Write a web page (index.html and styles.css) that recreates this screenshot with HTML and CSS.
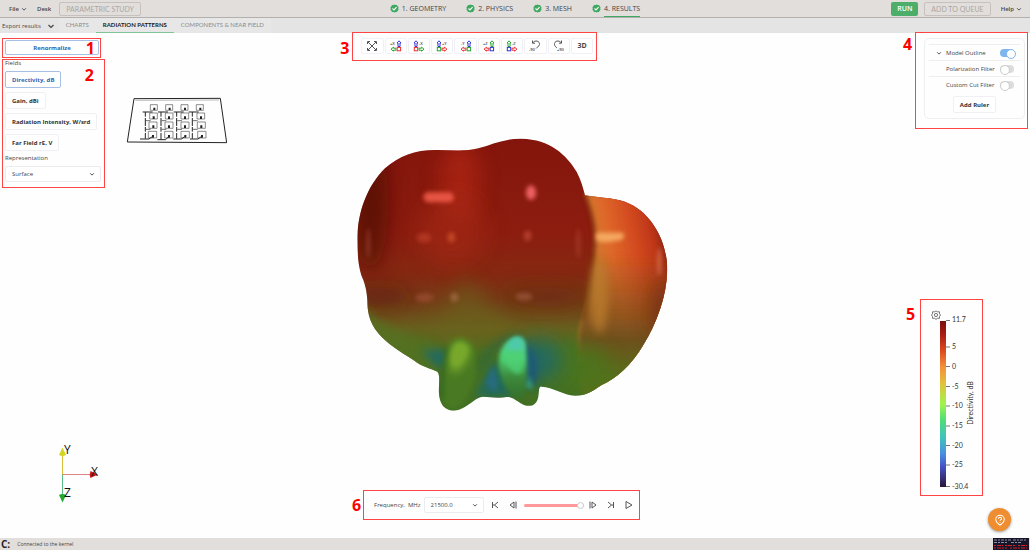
FILE: index.html
```html
<!DOCTYPE html>
<html lang="en">
<head>
<meta charset="utf-8">
<title>Radiation patterns</title>
<link rel="stylesheet" href="styles.css">
</head>
<body>
<svg class="defs" aria-hidden="true">
  <symbol id="chevron" viewBox="0 0 8 8"><path d="M1.500 3 4 5.500 6.500 3" fill="none" stroke="currentColor" stroke-width="1.200"/></symbol>
  <symbol id="check" viewBox="0 0 10 10"><path d="M5 .5 6.300 1.200 7.800 1.200 8.500 2.500 9.500 3.600 9.200 5 9.500 6.400 8.500 7.500 7.800 8.800 6.300 8.800 5 9.500 3.700 8.800 2.200 8.800 1.500 7.500 .5 6.400 .8 5 .5 3.600 1.500 2.500 2.200 1.200 3.700 1.200Z" fill="#3fa862"/><path d="m2.800 5 1.600 1.600L7.300 3.600" fill="none" stroke="#fff" stroke-width="1.200"/></symbol>
  <symbol id="axis-l" viewBox="0 0 12 12">
    <path class="up" d="M8 6.500V3H7L9 .8 11 3H10V6.500Z"/>
    <path class="side" d="M6 8.200H3.500V7.200L1 9.200 3.500 11.200V10.200H6Z"/>
    <rect class="box" x="7.200" y="7.400" width="3.400" height="3.400"/>
  </symbol>
  <symbol id="axis-r" viewBox="0 0 12 12">
    <path class="up" d="M2 6.500V3H1L3 .8 5 3H4V6.500Z"/>
    <path class="side" d="M6 8.200H8.500V7.200L11 9.200 8.500 11.200V10.200H6Z"/>
    <rect class="box" x="1.300" y="7.400" width="3.400" height="3.400"/>
  </symbol>
</svg>

<header class="topbar">
  <nav class="menu">
    <button class="plain">File <svg class="chev"><use href="#chevron"/></svg></button>
    <button class="plain">Desk</button>
    <button class="outlined" disabled>PARAMETRIC STUDY</button>
  </nav>
  <nav class="steps">
    <a href="#geometry"><svg><use href="#check"/></svg><span>1. GEOMETRY</span></a>
    <a href="#physics"><svg><use href="#check"/></svg><span>2. PHYSICS</span></a>
    <a href="#mesh"><svg><use href="#check"/></svg><span>3. MESH</span></a>
    <a href="#results" class="current"><svg><use href="#check"/></svg><span>4. RESULTS</span></a>
  </nav>
  <div class="actions">
    <button class="run">RUN</button>
    <button class="outlined queue" disabled>ADD TO QUEUE</button>
    <button class="plain">Help <svg class="chev"><use href="#chevron"/></svg></button>
  </div>
</header>

<nav class="subbar">
  <button class="plain export">Export results <svg class="chev"><use href="#chevron"/></svg></button>
  <a href="#charts">CHARTS</a>
  <a href="#patterns" class="current">RADIATION PATTERNS</a>
  <a href="#near">COMPONENTS &amp; NEAR FIELD</a>
</nav>

<main class="stage">
  <svg class="scene" viewBox="0 0 1030 505" role="img" aria-label="Antenna array and its far-field directivity">
    <defs>
      <linearGradient id="body" gradientUnits="userSpaceOnUse" x1="0" y1="26" x2="0" y2="842">
        <stop offset="0" stop-color="#84150c"/><stop offset=".35" stop-color="#8c1d0f"/><stop offset=".5" stop-color="#852912"/><stop offset=".6" stop-color="#753f18"/><stop offset=".7" stop-color="#68611f"/><stop offset=".78" stop-color="#4c7022"/><stop offset="1" stop-color="#417022"/>
      </linearGradient>
      <linearGradient id="lobe" gradientUnits="userSpaceOnUse" x1="715" y1="400" x2="955" y2="350">
        <stop offset="0" stop-color="#c08032"/><stop offset=".3" stop-color="#df692a"/><stop offset=".6" stop-color="#d44c20"/><stop offset=".85" stop-color="#bd3518"/><stop offset="1" stop-color="#812311"/>
      </linearGradient>
      <linearGradient id="lobe-fade" gradientUnits="userSpaceOnUse" x1="0" y1="370" x2="0" y2="740">
        <stop offset="0" stop-color="#8a4b1b" stop-opacity="0"/><stop offset=".45" stop-color="#86501d" stop-opacity=".75"/><stop offset=".7" stop-color="#6f501b"/><stop offset="1" stop-color="#58701f"/>
      </linearGradient>
      <linearGradient id="finger" x1="0" y1="0" x2="0" y2="1">
        <stop offset="0" stop-color="#4cc9a4"/><stop offset=".35" stop-color="#4dd074"/><stop offset=".65" stop-color="#3c8a3c"/><stop offset="1" stop-color="#36702c"/>
      </linearGradient>
      <clipPath id="outline"><path d="M22 330C22 250 50 170 105 115C150 75 200 58 265 60C310 61 350 65 385 55C430 42 465 25 515 26C600 28 650 75 680 125C693 150 700 175 705 196C760 205 800 203 840 222C910 255 952 340 952 420C950 500 920 580 880 645C845 705 800 745 755 765C725 785 710 797 675 797C640 795 610 772 575 770C565 768 568 785 565 800C560 828 540 832 520 824C500 815 490 800 470 801C440 806 420 800 400 800C375 800 350 840 310 842C270 840 265 800 267 770C267 750 270 735 262 725C240 715 215 710 190 690C150 665 110 640 85 610C55 575 52 540 52 510C50 480 45 465 40 450C25 420 22 370 22 330Z"/></clipPath>
      <filter id="b6" filterUnits="userSpaceOnUse" x="-100" y="-100" width="1200" height="1100"><feGaussianBlur stdDeviation="6"/></filter>
      <filter id="b12" filterUnits="userSpaceOnUse" x="-100" y="-100" width="1200" height="1100"><feGaussianBlur stdDeviation="12"/></filter>
      <filter id="b30" filterUnits="userSpaceOnUse" x="-200" y="-200" width="1400" height="1300"><feGaussianBlur stdDeviation="30"/></filter>
    </defs>

    <g transform="translate(120 57) scale(.3333)" fill="none" stroke="#222" stroke-width="3">
      <path d="M42 26 301 25 320 158 22 156Z"/>
      <path d="M46 31 297 30" stroke="#999" stroke-width="2"/>
      <g stroke-width="2" stroke="#555">
        <path d="M91 44h21v17H91zM137 44h21v17h-21zM183 44h21v17h-21zM229 44h21v17h-21z"/>
        <path d="M89 69h23v18H89zM136 69h23v18h-23zM183 69h23v18h-23zM231 69h23v18h-23z"/>
        <path d="M87 96h24v19H87zM135 96h24v19h-24zM183 96h24v19h-24zM232 96h24v19h-24z"/>
        <path d="M85 124h25v20H85zM134 124h25v20h-25zM183 124h25v20h-25zM233 124h25v20h-25z"/>
      </g>
      <g stroke-width="3">
        <path d="M68 66h30M114 66h30M161 66h30M206 66h30M60 147h27l10-7M112 149h25l9-9M160 147h24l10-7M210 147h24l10-7"/>
        <path d="M76 66v80M123 66v82M170 66v80M217 66v80" stroke-dasharray="14 4 24 3"/>
        <path d="M78 92h14M125 92h14M172 92h14M219 92h14M78 118h14M125 118h14M172 118h14M219 118h14" stroke-width="2"/>
      </g>
      <path d="M103 53v7M149 53v7M195 53v7M241 53v7M101 79v8M147 79v8M195 79v8M243 79v8M100 106v8M147 106v8M195 106v8M244 106v8M99 135v8M147 135v8M196 135v8M246 135v8" stroke-width="6"/>
    </g>

    <g transform="translate(350 97) scale(.3333)" clip-path="url(#outline)">
      <rect width="992" height="870" fill="url(#body)"/>
      <ellipse cx="60" cy="220" rx="55" ry="200" fill="#4c0a06" opacity=".7" filter="url(#b30)"/>
      <ellipse cx="330" cy="150" rx="60" ry="120" fill="#bd2b19" opacity=".55" filter="url(#b30)"/>
      <ellipse cx="310" cy="300" rx="100" ry="110" fill="#a92c17" opacity=".5" filter="url(#b30)"/>
      <ellipse cx="90" cy="500" rx="100" ry="30" fill="#5a180d" opacity=".6" filter="url(#b30)"/>
      <ellipse cx="590" cy="500" rx="130" ry="30" fill="#6b2711" opacity=".7" filter="url(#b30)"/>
      <path d="M345 430C300 530 260 590 220 640H530C470 570 390 520 345 430Z" fill="#6a651f" opacity=".55" filter="url(#b30)"/>
      <path d="M30 510C70 580 180 620 260 640V750H90Z" fill="#557222" opacity=".75" filter="url(#b12)"/>

      <path d="M704 190C722 240 738 290 734 340C728 440 720 510 690 590C680 650 700 720 720 790H970V190Z" fill="url(#lobe)" filter="url(#b6)"/>
      <path d="M704 370H980V820H700C690 740 680 680 690 590C712 500 720 440 704 370Z" fill="url(#lobe-fade)" filter="url(#b6)"/>
      <path d="M704 190C722 240 738 290 734 340C728 440 720 510 700 570" fill="none" stroke="#622b10" stroke-width="6" opacity=".7" filter="url(#b6)"/>
      <ellipse cx="748" cy="500" rx="26" ry="110" fill="#bd7e2e" opacity=".75" filter="url(#b12)"/>
      <ellipse cx="940" cy="540" rx="40" ry="90" fill="#6b2911" opacity=".7" filter="url(#b30)"/>
      <ellipse cx="690" cy="710" rx="90" ry="65" fill="#4b741e" opacity=".9" filter="url(#b30)"/>

      <ellipse cx="565" cy="690" rx="70" ry="60" fill="#226b60" filter="url(#b30)"/>
      <path d="M520 632C562 660 572 715 555 765H520Z" fill="#1d5878" filter="url(#b12)"/>
      <path d="M215 664C250 654 280 659 300 670V710H260Z" fill="#216a60" filter="url(#b12)"/>
      <path d="M430 690C415 740 385 775 375 800H490V740Z" fill="#23695a" filter="url(#b12)"/>
      <path d="M428 706 405 760 437 790 444 755Z" fill="#286c7d" filter="url(#b6)"/>
      <path d="M500 620C440 635 410 665 385 720" fill="none" stroke="#236448" stroke-width="18" opacity=".7" filter="url(#b12)"/>
      <path d="M320 628C285 640 280 700 273 765C270 820 290 842 320 834C355 810 390 740 372 665C365 640 345 624 320 628Z" fill="#4a7921" filter="url(#b6)"/>
      <path d="M290 655C280 720 272 770 278 805" fill="none" stroke="#285b20" stroke-width="6" filter="url(#b6)"/>
      <path d="M322 634C300 650 295 705 308 730C335 725 357 690 360 658C352 637 338 632 322 634Z" fill="#78a82c" filter="url(#b12)"/>
      <path d="M322 640C304 650 300 690 308 708C332 705 350 680 354 658C348 642 336 638 322 640Z" fill="#78a82c" filter="url(#b6)"/>
      <path d="M500 620C470 628 448 655 447 690C444 745 475 800 510 805C540 785 530 690 526 640C520 622 510 618 500 620Z" fill="url(#finger)" filter="url(#b6)"/>
      <path d="M500 626C475 636 458 662 458 680C470 705 484 730 508 732C524 722 522 680 518 640Z" fill="#4fd276" opacity=".75" filter="url(#b6)"/>
      <path d="M494 622C480 630 474 645 470 660H522L518 630Z" fill="#4fc9b2" opacity=".85" filter="url(#b6)"/>
      <path d="M538 735 527 770 550 780Z" fill="#37a77e" opacity=".8" filter="url(#b6)"/>

      <rect x="220" y="187" width="92" height="30" rx="15" fill="#f05a49" opacity=".9" filter="url(#b6)"/>
      <ellipse cx="543" cy="188" rx="15" ry="22" fill="#ee6063" filter="url(#b6)"/>
      <ellipse cx="533" cy="317" rx="12" ry="16" fill="#bd4634" opacity=".8" filter="url(#b6)"/>
      <ellipse cx="222" cy="323" rx="22" ry="15" fill="#c94632" opacity=".55" filter="url(#b6)"/>
      <ellipse cx="304" cy="322" rx="12" ry="16" fill="#dc5e32" opacity=".6" filter="url(#b6)"/>
      <ellipse cx="224" cy="503" rx="28" ry="13" fill="#a8553c" opacity=".55" filter="url(#b6)"/>
      <ellipse cx="313" cy="502" rx="12" ry="14" fill="#ad7350" opacity=".65" filter="url(#b6)"/>
      <ellipse cx="522" cy="500" rx="26" ry="11" fill="#a96244" opacity=".6" filter="url(#b6)"/>
      <ellipse cx="685" cy="340" rx="7" ry="45" fill="#b64937" opacity=".5" filter="url(#b6)"/>
      <ellipse cx="55" cy="340" rx="6" ry="45" fill="#a34a3b" opacity=".6" filter="url(#b6)"/>
      <path d="M738 308H818C826 312 822 328 812 330C785 334 760 342 738 330Z" fill="#f5a860" filter="url(#b6)"/>
      <ellipse cx="928" cy="395" rx="6" ry="42" fill="#e48b6b" opacity=".6" filter="url(#b6)"/>
    </g>

    <g class="triad">
      <path d="M62.500 442V420" stroke="#d6bd35"/><path d="M62.500 442V464" stroke="#59bd87"/><path d="M62.500 441.500H91" stroke="#dc8585"/>
      <path d="M62.500 414.500 66 422Q62.500 424 59 422Z" fill="#d2d622"/>
      <path d="M98 441.500 90.500 445Q89 441.500 90.500 438Z" fill="#c81818"/>
      <path d="M62.500 469.500 66 462Q62.500 460 59 462Z" fill="#25a82d"/>
      <text x="64" y="421">Y</text><text x="91" y="443">X</text><text x="64" y="464">Z</text>
    </g>
  </svg>

  <aside class="sidebar">
    <section class="callout normalize"><button class="btn wide active">Renormalize</button><b class="num">1</b></section>
    <section class="callout fields">
      <h2>Fields</h2>
      <button class="btn active">Directivity, dB</button>
      <button class="btn">Gain, dBi</button>
      <button class="btn">Radiation Intensity, W/srd</button>
      <button class="btn">Far Field rE, V</button>
      <label for="rep">Representation</label>
      <span class="select rep"><select id="rep"><option>Surface</option></select><svg class="chev"><use href="#chevron"/></svg></span>
      <b class="num">2</b>
    </section>
  </aside>

  <section class="callout tools">
    <b class="num">3</b>
    <button aria-label="Fit view"><svg viewBox="0 0 12 12" fill="none" stroke="#555"><path d="M1.500 4V1.500H4M8 1.500h2.500V4M10.500 8v2.500H8M4 10.500H1.500V8M2 2l8 8M10 2l-8 8"/></svg></button>
    <button aria-label="View +X" class="x"><svg viewBox="0 0 12 12"><use href="#axis-l"/><text x="0" y="5">+X</text></svg></button>
    <button aria-label="View -X" class="x"><svg viewBox="0 0 12 12"><use href="#axis-r"/><text x="6" y="5">-X</text></svg></button>
    <button aria-label="View +Y" class="y"><svg viewBox="0 0 12 12"><use href="#axis-r"/><text x="6" y="5">+Y</text></svg></button>
    <button aria-label="View -Y" class="y"><svg viewBox="0 0 12 12"><use href="#axis-l"/><text x="1" y="5">-Y</text></svg></button>
    <button aria-label="View +Z" class="z"><svg viewBox="0 0 12 12"><use href="#axis-l"/><text x="0" y="5">+Z</text></svg></button>
    <button aria-label="View -Z" class="z"><svg viewBox="0 0 12 12"><use href="#axis-r"/><text x="6" y="5">-Z</text></svg></button>
    <button aria-label="Rotate -90"><svg viewBox="0 0 12 12"><path d="M3.500 3C6-.5 11 1 10.500 4.500 10.200 6.500 8 7 7 8.500M3.500.5V3.200H6" fill="none" stroke="#555"/><text x="0" y="11">-90</text></svg></button>
    <button aria-label="Rotate +90"><svg viewBox="0 0 12 12"><path d="M8.500 3C6-.5 1 1 1.500 4.500 1.800 6.500 3 7 4 8M8.500.5V3.200H6" fill="none" stroke="#555"/><text x="4" y="11">+90</text></svg></button>
    <button>3D</button>
  </section>

  <section class="callout filters">
    <b class="num">4</b>
    <div class="card">
      <div class="row"><svg class="chev"><use href="#chevron"/></svg><label for="outline-on">Model Outline</label><input type="checkbox" id="outline-on" checked></div>
      <div class="row"><label for="polar">Polarization Filter</label><input type="checkbox" id="polar"></div>
      <div class="row"><label for="cut">Custom Cut Filter</label><input type="checkbox" id="cut"></div>
      <button class="btn ruler">Add Ruler</button>
    </div>
  </section>

  <section class="callout legend">
    <b class="num">5</b>
    <svg viewBox="0 0 61 195" role="img" aria-label="Directivity colour scale">
      <defs><linearGradient id="scale" x1="0" y1="0" x2="0" y2="1">
        <stop offset="0" stop-color="#7a1010"/><stop offset=".08" stop-color="#a81d14"/><stop offset=".18" stop-color="#dc4a20"/><stop offset=".28" stop-color="#f4923a"/><stop offset=".38" stop-color="#dfc33c"/><stop offset=".5" stop-color="#a0f44a"/><stop offset=".6" stop-color="#4edc7a"/><stop offset=".7" stop-color="#3fc4bc"/><stop offset=".8" stop-color="#4a8fe0"/><stop offset=".88" stop-color="#4450c4"/><stop offset="1" stop-color="#29153a"/>
      </linearGradient></defs>
      <g fill="none" stroke="#666" stroke-width=".9"><path d="M15 11 16.500 11.800 18.500 11.800 18.500 13.800 19.500 15 18.500 16.500 18.500 18.300 16.500 18.300 15 19.300 13.500 18.300 11.500 18.300 11.500 16.500 10.500 15 11.500 13.800 11.500 11.800 13.500 11.800Z"/><circle cx="15" cy="15" r="1.600"/></g>
      <rect x="19" y="21" width="6" height="166" fill="url(#scale)"/>
      <path d="M25 20.500h4M25 47h4M25 66.500h4M25 86.500h4M25 106h4M25 126h4M25 145.500h4M25 165h4M25 186.500h4" stroke="#777"/>
      <g><text x="31" y="22">11.7</text><text x="31" y="49">5</text><text x="31" y="69">0</text><text x="31" y="89">-5</text><text x="31" y="108">-10</text><text x="31" y="128">-15</text><text x="31" y="148">-20</text><text x="31" y="167">-25</text><text x="31" y="189">-30.4</text></g>
      <text transform="translate(52 103) rotate(-90)" text-anchor="middle">Directivity, dB</text>
    </svg>
  </section>

  <section class="callout player">
    <b class="num">6</b>
    <label for="freq">Frequency,&nbsp; MHz</label>
    <span class="select freq"><select id="freq"><option>21500.0</option></select><svg class="chev"><use href="#chevron"/></svg></span>
    <button aria-label="First"><svg viewBox="0 0 10 10"><path d="M2.500 2v6M8 2 4.500 5 8 8M3 5h1.500"/></svg></button>
    <button aria-label="Previous"><svg viewBox="0 0 10 10"><path d="M6 2 2 5l4 3ZM8 1.500v7"/></svg></button>
    <input type="range" aria-label="Frequency position" min="0" max="100" value="100">
    <button aria-label="Next"><svg viewBox="0 0 10 10"><path d="m4 2 4 3-4 3ZM2 1.500v7"/></svg></button>
    <button aria-label="Last"><svg viewBox="0 0 10 10"><path d="M7.500 2v6M2 2l3.500 3L2 8M5.500 5H7"/></svg></button>
    <button aria-label="Play"><svg viewBox="0 0 10 10"><path d="M2 1.500v7l6-3.500Z"/></svg></button>
  </section>

  <button class="help" aria-label="Support"><svg viewBox="0 0 14 14" fill="none" stroke="#fff" stroke-width="1.200"><path d="M7 13C4.500 11 2 10 2 6.500a5 5 0 0 1 10 0C12 10 9.500 11 7 13Z"/><path d="M5.200 5.500C5.200 3.200 8.800 3.200 8.800 5.400 8.800 6.600 7 6.700 7 8M7 9.200v1"/></svg></button>
</main>

<footer class="status">
  <b>C:</b><span>Connected to the kernel</span>
  <svg class="thumb" viewBox="0 0 36 12"><rect width="36" height="12" fill="#171528"/><path d="M1 2h17M20 2h14M1 4.500h13M18 4.500h10" stroke="#8f90aa" stroke-dasharray="3 1 2 1"/><path d="M1 7.500h9M12 7.500h10M25 7.500h9M1 10h13M17 10h17" stroke="#d5202b" stroke-dasharray="2 1 4 1"/></svg>
</footer>
</body>
</html>
```
FILE: styles.css
```css
* { box-sizing: border-box; }
body { margin: 0; min-height: 100vh; display: flex; flex-direction: column; font: 6px/8px "Open Sans", "Noto Sans", sans-serif; color: #444; background: #fefefe; }
button, select, input { font: inherit; color: inherit; margin: 0; padding: 0; border: 0; background: none; }
a { color: inherit; text-decoration: none; }
svg { display: block; }
.defs { position: absolute; width: 0; height: 0; }
.chev { width: 6px; height: 6px; flex: none; }

.topbar { display: grid; grid-template-columns: 1fr auto 1fr; align-items: center; height: 18px; background: #e2dedb; border-bottom: 1px solid #b3afac; }
.menu, .actions { display: flex; align-items: center; }
.menu { padding-left: 9px; gap: 10px; }
.actions { justify-content: flex-end; gap: 6px; padding-right: 8px; }
.plain { display: flex; align-items: center; gap: 2px; font-weight: 600; }
.menu .outlined { margin-left: -2px; }
.outlined { height: 14px; padding: 0 6px; border: 1px solid #c5c1be; border-radius: 2px; color: #aaa6a3; font: 7px/8px Lato, sans-serif; }
.actions .plain { margin-left: 4px; }
.run { width: 27px; height: 14px; border-radius: 2px; background: #4cae68; color: #fff; font-size: 7px; font-weight: 600; }
.steps { display: flex; gap: 20px; font-size: 7px; }
.steps a { display: flex; align-items: center; gap: 3px; }
.steps svg { width: 9px; height: 9px; }
.steps span { height: 16px; line-height: 16px; border-bottom: 1px solid transparent; }
.steps .current span { border-color: #3fa862; }

.subbar { display: flex; align-items: stretch; height: 15px; background: #e4e4e4; color: #8b8b8b; }
.subbar a { display: flex; align-items: center; padding: 0 7px; border-bottom: 1px solid transparent; background: #e7e7e7; font-family: Lato, sans-serif; }
.subbar .current { color: #222; font-weight: 700; border-color: #7fc397; }
.export { padding: 0 4px 0 2px; gap: 6px; color: #444; font-weight: 400; }
.export .chev { width: 8px; height: 8px; }

.stage { position: relative; flex: 1; min-height: 505px; }
.scene { position: absolute; inset: 0; width: 100%; height: 100%; }
.triad text { font: 12px "Open Sans", sans-serif; fill: #111; }

.callout { position: absolute; border: 1px solid #f44; }
.num { position: absolute; color: #f00; font-size: 16px; line-height: 16px; }
.btn { height: 17px; padding: 0 6px; border: 1px solid #f0f0f4; border-radius: 2px; background: #fff; color: #333; font-weight: 700; }
.btn.active { border-color: #a5bfe5; color: #2d66b5; }

.sidebar { position: absolute; top: 5px; left: 2px; width: 103px; }
.sidebar .callout { position: relative; }
.normalize { width: 99px; padding: 1px 1px 2px 2px; }
.normalize .num { top: 1px; right: 5px; }
.btn.wide { display: block; width: 100%; height: 15px; }
.fields { display: flex; flex-direction: column; align-items: flex-start; gap: 4px; padding: 0 3px 5px 2px; margin-top: 1px; }
.fields .num { top: 7px; right: 10px; }
.fields h2 { margin: 0; font: inherit; line-height: 7px; }
.fields label { line-height: 7px; }
.select { position: relative; display: block; }
.select select { appearance: none; width: 100%; height: 16px; padding: 0 6px; border: 1px solid #ececf0; border-radius: 2px; background: #fff; }
.select .chev { position: absolute; right: 6px; top: 5px; pointer-events: none; }
.rep { width: 96px; }

.tools { top: -1px; left: 34.2%; width: 245px; height: 29px; display: flex; gap: 1px; padding: 5px 3px 6px 8px; }
.tools .num { top: 7px; left: -13px; }
.tools button { flex: 1; display: flex; align-items: center; justify-content: center; border: 1px solid #f0f0f6; border-radius: 2px; background: #fff; font-size: 7px; font-weight: 700; }
.tools button svg { width: 12px; height: 12px; overflow: visible; }
.tools text { font: 600 4px "Open Sans", sans-serif; fill: #444; }
.up, .side, .box { fill: #fff; stroke-width: 1; }
.x { --up: #3434d8; --side: #23a52b; --box: #ef3030; }
.y { --up: #3434d8; --side: #ef3030; --box: #23a52b; }
.z { --up: #23a52b; --side: #ef3030; --box: #3434d8; }
.up { stroke: var(--up); }
.side { stroke: var(--side); }
.box { stroke: var(--box); }

.filters { top: -1px; right: 2px; width: 113px; padding: 5px 2px 9px 8px; }
.filters .num { top: 3px; left: -13px; }
.card { display: flex; flex-direction: column; align-items: center; padding: 5px 4px; border: 1px solid #efeff2; border-radius: 5px; }
.row { display: flex; align-items: center; justify-content: space-between; width: 100%; height: 16px; padding: 0 6px 0 17px; border-top: 1px solid #eee; }
.row .chev { margin-left: -10px; }
.row:first-child { justify-content: flex-start; gap: 4px; }
.row:first-child input { margin-left: auto; }
.ruler { margin-top: 4px; }
input[type="checkbox"] { appearance: none; display: block; width: 14px; height: 8px; border-radius: 4px; background: #dcdcdc; flex: none; }
input[type="checkbox"]::before { content: ""; display: block; width: 8px; height: 8px; border: 1px solid #ccc; border-radius: 50%; background: #fff; }
input[type="checkbox"]:checked { background: #7db5ee; }
input[type="checkbox"]:checked::before { margin-left: 6px; border-color: #7db5ee; }

.legend { right: 47px; bottom: 42px; width: 63px; height: 197px; }
.legend .num { top: 6px; left: -15px; }
.legend text { font: 7px Lato, sans-serif; fill: #333; }

.player { left: 35.25%; bottom: 18px; width: 277px; height: 30px; display: flex; align-items: center; gap: 8px; padding: 0 5px 0 10px; }
.player .num { top: 6px; left: -12px; }
.player label { margin-right: -5px; white-space: nowrap; }
.freq { width: 60px; margin-right: -2px; }
.player button svg { width: 10px; height: 10px; fill: none; stroke: #555; }
input[type="range"] { appearance: none; flex: 1; min-width: 0; height: 8px; margin: 0 -4px 0 -2px; }
input[type="range"]::-webkit-slider-runnable-track { height: 3px; border-radius: 2px; background: #f99; }
input[type="range"]::-webkit-slider-thumb { appearance: none; width: 7px; height: 7px; margin-top: -2px; border: 1px solid #ccc; border-radius: 50%; background: #fff; }

.help { position: absolute; right: 19px; bottom: 7px; display: grid; place-items: center; width: 23px; height: 23px; border-radius: 50%; background: #ee8e30; box-shadow: 0 1px 3px #0006; }
.help svg { width: 12px; height: 12px; }

.status { display: flex; align-items: center; gap: 7px; height: 12px; padding-left: 1px; background: #e2dedb; font-size: 5px; }
.status b { font: 700 10px/12px "Open Sans", sans-serif; color: #222; }
.thumb { width: 36px; height: 12px; margin: 0 1px 0 auto; }
```
